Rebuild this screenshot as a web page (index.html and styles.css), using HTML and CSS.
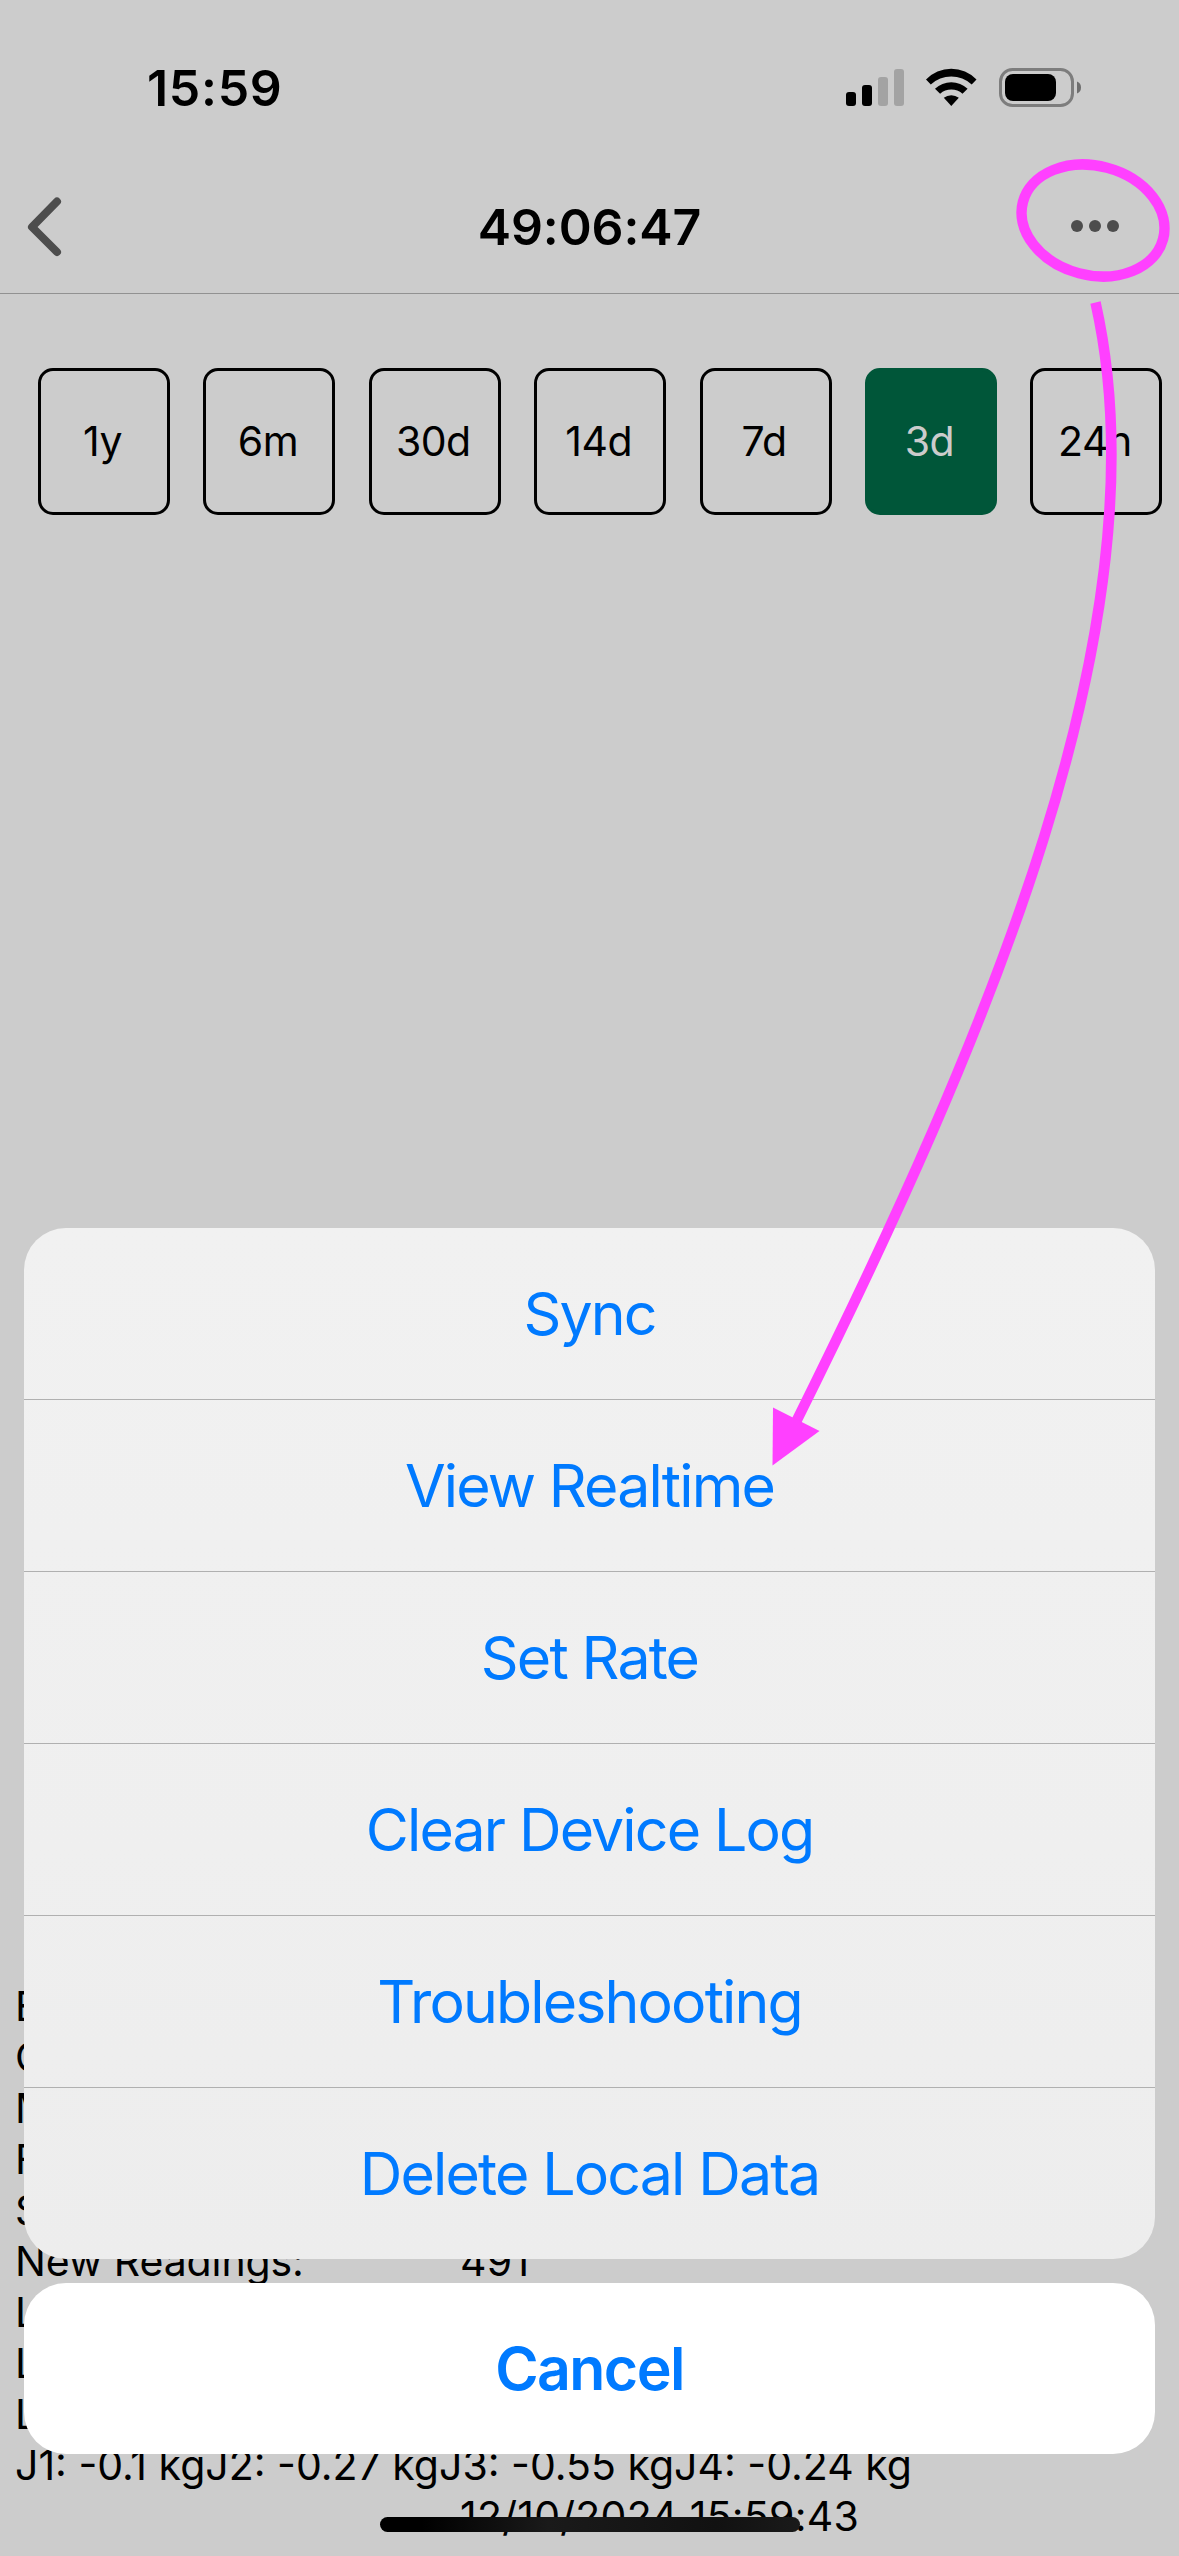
FILE: index.html
```html
<!DOCTYPE html>
<html lang="en">
<head>
<meta charset="utf-8">
<title>49:06:47</title>
<link rel="stylesheet" href="styles.css">
</head>
<body>
<div class="screen">
  <div class="status-bar">
    <span class="clock">15:59</span>
    <svg class="status-icons" width="240" height="44" viewBox="0 0 240 44">
      <rect x="4" y="26" width="10" height="14" rx="3"/>
      <rect x="20" y="19" width="10" height="21" rx="3"/>
      <rect x="36" y="11" width="10" height="29" rx="3" fill="#a3a3a3"/>
      <rect x="52" y="3" width="10" height="37" rx="3" fill="#a3a3a3"/>
      <path d="M84 13.500A35 35 0 0 1 134.500 13.500L129.700 18.500A30 30 0 0 0 88.800 18.500Z"/>
      <path d="M93 22.800A23.500 23.500 0 0 1 125.600 22.800L120.500 27.800A17 17 0 0 0 98.100 27.800Z"/>
      <path d="M101.800 31.800A12 12 0 0 1 116.800 31.800L109.300 40Z"/>
      <rect x="158.500" y="3.500" width="72" height="36" rx="12" fill="none" stroke="#7d7d7d" stroke-width="3"/>
      <rect x="163" y="8" width="51" height="27" rx="8"/>
      <path d="M235 15.500Q239 17 239 21.500Q239 26 235 27.500Z" fill="#6e6e6e"/>
    </svg>
  </div>
  <header class="nav-bar">
    <svg class="back" width="44" height="64" viewBox="0 0 44 64"><path d="M37 6.500L12 32L37 57"/></svg>
    <h1 class="title">49:06:47</h1>
    <svg class="more" width="48" height="12" viewBox="0 0 48 12"><circle cx="6" cy="6" r="6"/><circle cx="24" cy="6" r="6"/><circle cx="42" cy="6" r="6"/></svg>
  </header>
  <nav class="ranges">
    <span class="range">1y</span><span class="range">6m</span><span class="range">30d</span><span class="range">14d</span><span class="range">7d</span><span class="range active">3d</span><span class="range">24h</span>
  </nav>
  <dl class="details">
    <div><dt>E</dt></div>
    <div><dt>C</dt></div>
    <div><dt>M</dt></div>
    <div><dt>F</dt></div>
    <div><dt>S</dt></div>
    <div><dt>New Readings:</dt><dd>491</dd></div>
    <div><dt>L</dt></div>
    <div><dt>L</dt></div>
    <div><dt>L</dt></div>
    <div class="loads">J1: -0.1 kgJ2: -0.27 kgJ3: -0.55 kgJ4: -0.24 kg</div>
    <div><dt></dt><dd class="stamp">12/10/2024 15:59:43</dd></div>
  </dl>
  <div class="overlay">
    <div class="sheet">
      <button>Sync</button>
      <button>View Realtime</button>
      <button>Set Rate</button>
      <button>Clear Device Log</button>
      <button>Troubleshooting</button>
      <button>Delete Local Data</button>
    </div>
    <button class="cancel">Cancel</button>
    <div class="home-bar"></div>
  </div>
  <svg class="annotation" width="1179" height="2556" viewBox="0 0 1179 2556">
    <ellipse cx="1093" cy="220.500" rx="72.500" ry="54.600" transform="rotate(14.900 1093 220.500)"/>
    <path d="M1095.500 302.500C1167 620 986 1040 795 1424"/>
    <polygon points="773,1407.500 819.500,1431 772.500,1465.500"/>
  </svg>
</div>
</body>
</html>
```
FILE: styles.css
```css
* { box-sizing: border-box; }
body { margin: 0; background: #ccc; font-family: Inter, sans-serif; color: #000; }
.screen { position: relative; width: 1179px; height: 2556px; overflow: hidden; display: flex; flex-direction: column; }
.status-bar { height: 160px; padding: 66px 97px 0 147px; display: flex; justify-content: space-between; align-items: flex-start; }
.clock { font-size: 50px; font-weight: 600; line-height: 44px; letter-spacing: 0.700px; }
.status-icons { display: block; }
.nav-bar { height: 134px; padding: 0 60px 0 20px; border-bottom: 1px solid #919191; display: grid; grid-template-columns: 200px 1fr 160px; align-items: center; }
.back { display: block; fill: none; stroke: #4d4d4d; stroke-width: 8; stroke-linecap: round; stroke-linejoin: round; }
.title { margin: 0; text-align: center; font-size: 50px; font-weight: 600; line-height: 60px; letter-spacing: -0.1px; }
.more { fill: #4d4d4d; justify-self: end; margin-bottom: 1px; }
.ranges { display: flex; gap: 33.400px; padding: 74px 0 0 38px; }
.range { flex: none; width: 132px; height: 147px; padding: 0 3px 2px 0; border: 3px solid #000; border-radius: 15px; display: flex; align-items: center; justify-content: center; font-size: 41px; letter-spacing: -0.5px; }
.range.active { background: #005639; border-color: #005639; color: #ccc; }
.details { margin: auto 0 0; padding: 0 0 0 15px; font-size: 41px; line-height: 51px; height: 575px; white-space: nowrap; }
.details div { display: flex; height: 51px; }
.details dt { width: 445px; letter-spacing: -0.1px; }
.details dd { margin: 0; letter-spacing: 0.250px; }
.details .loads { letter-spacing: 0; }
.overlay { position: absolute; left: 24px; right: 24px; top: 1228px; display: flex; flex-direction: column; }
.sheet { background: linear-gradient(#f1f1f1, #efefef 60%, #ededed); border-radius: 42px; overflow: hidden; }
button { display: block; width: 100%; height: 172px; margin: 0; padding: 0; border: 0; border-bottom: 1px solid #b0b0b0; background: none; color: #007aff; font: 400 59px/1 Inter, sans-serif; letter-spacing: -1.850px; }
.sheet button:last-child { border: 0; height: 171px; }
.cancel { margin-top: 24px; height: 171px; background: #fff; border: 0; border-radius: 42px; font-weight: 600; letter-spacing: -1.600px; }
.home-bar { width: 420px; height: 15px; margin: 63px auto 0 356px; border-radius: 8px; background: linear-gradient(90deg, #000, #000 10%, #1a1a1a 40%, #111 80%, #1a1a1a); }
.annotation { position: absolute; left: 0; top: 0; fill: none; stroke: #ff40ff; stroke-width: 10.500; }
.annotation polygon { fill: #ff40ff; stroke: none; }
```
